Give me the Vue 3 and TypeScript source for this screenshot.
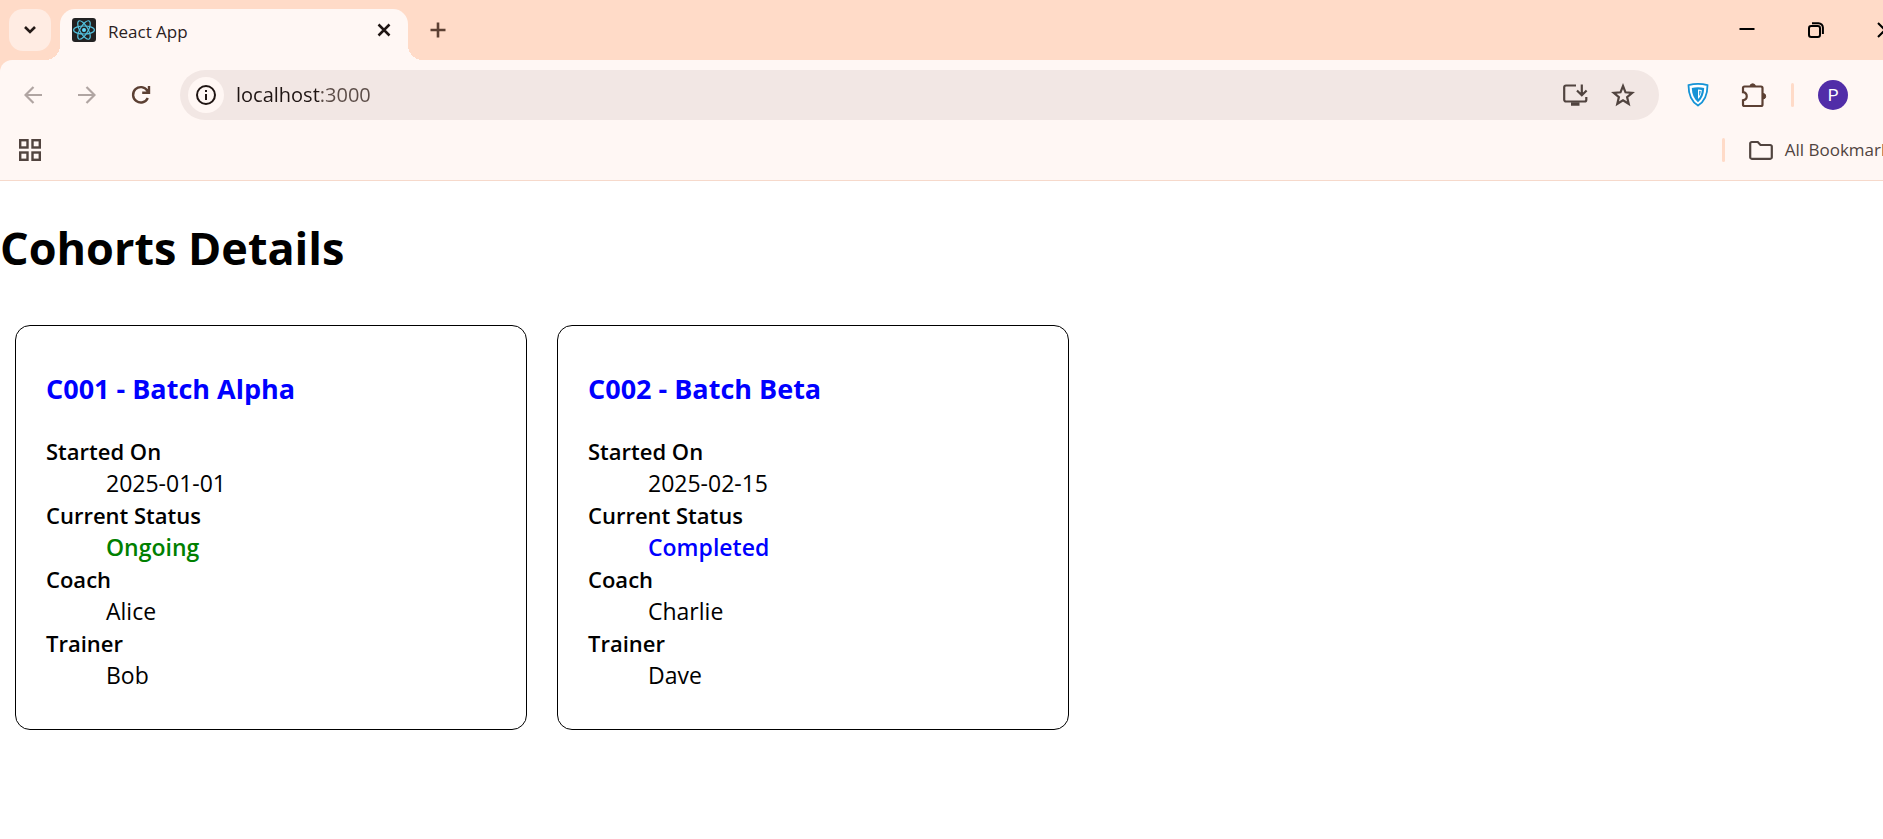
<script setup lang="ts">
import { ref } from 'vue'

interface Cohort {
  code: string
  name: string
  startedOn: string
  status: 'Ongoing' | 'Completed'
  coach: string
  trainer: string
}

const address = ref('localhost:3000')

const cohorts: Cohort[] = [
  { code: 'C001', name: 'Batch Alpha', startedOn: '2025-01-01', status: 'Ongoing', coach: 'Alice', trainer: 'Bob' },
  { code: 'C002', name: 'Batch Beta', startedOn: '2025-02-15', status: 'Completed', coach: 'Charlie', trainer: 'Dave' },
]
</script>

<template>
  <div class="screen">
    <header class="browser">
      <div class="strip">
        <button class="tab-search" type="button" aria-label="Search tabs">
          <svg width="14" height="10" viewBox="0 0 14 10"><path d="M2 2l5 5 5-5" fill="none" stroke="#241a17" stroke-width="2.6" /></svg>
        </button>
        <div class="tab">
          <svg class="favicon" width="24" height="24" viewBox="0 0 24 24">
            <rect width="24" height="24" rx="3" fill="#222" />
            <circle cx="12" cy="12" r="2" fill="#61dafb" />
            <g fill="none" stroke="#53c1de" stroke-width="1.2">
              <ellipse cx="12" cy="12" rx="10.4" ry="4" />
              <ellipse cx="12" cy="12" rx="10.4" ry="4" transform="rotate(60 12 12)" />
              <ellipse cx="12" cy="12" rx="10.4" ry="4" transform="rotate(120 12 12)" />
            </g>
          </svg>
          <span class="tab-title">React App</span>
          <button class="tab-close" type="button" aria-label="Close tab">
            <svg width="14" height="14" viewBox="0 0 14 14"><path d="M1.500 1.500l11 11M12.500 1.500l-11 11" stroke="#1f1513" stroke-width="2.5" /></svg>
          </button>
        </div>
        <button class="new-tab" type="button" aria-label="New tab">
          <svg width="16" height="16" viewBox="0 0 16 16"><path d="M8 0.500v15M0.500 8h15" stroke="#5c4033" stroke-width="2.600" /></svg>
        </button>
        <div class="window-buttons">
          <button type="button" aria-label="Minimize">
            <svg width="16" height="16" viewBox="0 0 16 16"><path d="M0.500 7h15" stroke="#000" stroke-width="2" /></svg>
          </button>
          <button type="button" aria-label="Restore">
            <svg width="16" height="16" viewBox="0 0 16 16" fill="none" stroke="#000" stroke-width="2">
              <rect x="1" y="4" width="11" height="11" rx="2.200" />
              <path d="M4 1.200h6.500a4.400 4.400 0 0 1 4.400 4.400V12" />
            </svg>
          </button>
          <button type="button" aria-label="Close">
            <svg width="16" height="16" viewBox="0 0 16 16"><path d="M1 1l14 14M15 1L1 15" stroke="#000" stroke-width="2" /></svg>
          </button>
        </div>
      </div>

      <div class="toolbar">
        <nav class="nav" aria-label="History">
          <button type="button" aria-label="Back">
            <svg width="18" height="18" viewBox="0 0 18 18"><path d="M18 9H2M9.500 1L1.500 9l8 8" fill="none" stroke="#b0a5a2" stroke-width="2.200" /></svg>
          </button>
          <button type="button" aria-label="Forward">
            <svg width="18" height="18" viewBox="0 0 18 18"><path d="M0 9h16M8.500 1l8 8-8 8" fill="none" stroke="#b0a5a2" stroke-width="2.200" /></svg>
          </button>
          <button type="button" aria-label="Reload">
            <svg width="20" height="20" viewBox="0 0 20 20" fill="none" stroke="#5c4033" stroke-width="2.400"><path d="M16.800 13A7.700 7.700 0 1 1 16.300 5.700L17.500 7.300M18 1v6.800h-6.800" /></svg>
          </button>
        </nav>
        <div class="omnibox">
          <button class="site-info" type="button" aria-label="View site information">
            <svg width="22" height="22" viewBox="0 0 22 22"><circle cx="11" cy="11" r="9" fill="none" stroke="#1f1513" stroke-width="2" /><path d="M11 10v6M11 6v2" stroke="#1f1513" stroke-width="2" /></svg>
          </button>
          <input v-model="address" class="address" type="text" aria-label="Address" spellcheck="false" />
          <button class="omni-action" type="button" aria-label="Install app">
            <svg width="26" height="24" viewBox="0 0 26 24" fill="none" stroke="#51443f" stroke-width="2.200">
              <path d="M14 2.500H4A1.800 1.800 0 0 0 2.200 4.300v12.400a1.800 1.800 0 0 0 1.800 1.800h18.500a1.800 1.800 0 0 0 1.800-1.800V14M19.800 1.500v10M15 7.500l4.800 4.800 4.800-4.800" />
              <path d="M9 21h8.500" stroke-width="3.500" />
            </svg>
          </button>
          <button class="omni-action" type="button" aria-label="Bookmark this page">
            <svg width="24" height="24" viewBox="0 0 24 24"><path d="M12 3l2.500 6.300 6.700.5-5.100 4.300 1.600 6.700L12 17.200l-5.700 3.600 1.600-6.700-5.100-4.300 6.700-.5z" fill="none" stroke="#51443f" stroke-width="2.200" /></svg>
          </button>
        </div>
        <button class="extension" type="button" aria-label="VPN extension">
          <svg width="22" height="24" viewBox="0 0 22 24">
            <path d="M1.500 2.200Q11-.4 20.500 2.200C20.500 11.500 17.500 18.500 11 22.600 4.500 18.500 1.500 11.500 1.500 2.200z" fill="#fff" stroke="#1593d6" stroke-width="1.800" />
            <path d="M4.800 5Q11 3.300 17.200 5C17 11.300 15 16 11 19.200 7 16 5 11.300 4.800 5z" fill="#1593d6" />
            <path d="M11 6.600q2 0 3.800.5c-.2 3.600-1.300 6.700-3.800 9z" fill="#fff" />
            <path d="M12.200 7.800q.8 0 1.500.2c-.1 2.100-.6 3.700-1.500 5z" fill="#1593d6" />
          </svg>
        </button>
        <button class="extension puzzle" type="button" aria-label="Extensions">
          <svg width="26" height="26" viewBox="0 0 26 26">
            <path d="M3.500 4.500h16.500a1.500 1.500 0 0 1 1.500 1.500v16.500a1.500 1.500 0 0 1-1.500 1.500H3.500A1.500 1.500 0 0 1 2 22.500V18.300c5-.8 5-7.300 0-8.100V6a1.500 1.500 0 0 1 1.500-1.500z" fill="none" stroke="#5c4033" stroke-width="2.200" />
            <path d="M9 4.500a2.700 2.700 0 0 1 5.400 0zM22 11.500a2.700 2.700 0 0 1 0 5.400z" fill="#5c4033" stroke="#5c4033" />
          </svg>
        </button>
        <span class="divider"></span>
        <button class="avatar" type="button" aria-label="Profile">P</button>
      </div>

      <div class="bookmarks">
        <button class="apps" type="button" aria-label="Apps">
          <svg width="22" height="22" viewBox="0 0 22 22" fill="none" stroke="#51443f" stroke-width="2.400">
            <rect x="1.200" y="1.200" width="7.300" height="7.300" /><rect x="13.500" y="1.200" width="7.300" height="7.300" />
            <rect x="1.200" y="13.500" width="7.300" height="7.300" /><rect x="13.500" y="13.500" width="7.300" height="7.300" />
          </svg>
        </button>
        <span class="divider"></span>
        <button class="all-bookmarks" type="button">
          <svg width="24" height="20" viewBox="0 0 24 20"><path d="M2.800 2h6l2.700 3h9.700A1.600 1.600 0 0 1 22.800 6.600v10.600A1.600 1.600 0 0 1 21.200 18.800H2.800A1.600 1.600 0 0 1 1.200 17.200V3.600A1.600 1.600 0 0 1 2.800 2z" fill="none" stroke="#51443f" stroke-width="2.200" /></svg>
          <span>All Bookmarks</span>
        </button>
      </div>
    </header>

    <main class="page">
      <h1>Cohorts Details</h1>
      <div class="cohorts">
        <article v-for="cohort in cohorts" :key="cohort.code" class="card">
          <h3>{{ cohort.code }} - {{ cohort.name }}</h3>
          <dl>
            <dt>Started On</dt>
            <dd>{{ cohort.startedOn }}</dd>
            <dt>Current Status</dt>
            <dd :class="['status', cohort.status.toLowerCase()]">{{ cohort.status }}</dd>
            <dt>Coach</dt>
            <dd>{{ cohort.coach }}</dd>
            <dt>Trainer</dt>
            <dd>{{ cohort.trainer }}</dd>
          </dl>
        </article>
      </div>
    </main>
  </div>
</template>

<style>
body {
  margin: 0;
  background: #fff;
}
</style>

<style scoped>
.screen {
  overflow: hidden;
  font-family: 'Open Sans', 'Noto Sans', sans-serif;
  color: #000;
}

button {
  display: flex;
  align-items: center;
  justify-content: center;
  flex: none;
  margin: 0;
  padding: 0;
  border: 0;
  background: none;
  font: inherit;
  color: inherit;
}

svg {
  display: block;
  flex: none;
}

/* The browser frame runs past the right edge of the viewport. */
.browser {
  width: calc(100% + 36px);
  background: #ffdbc8;
  border-bottom: 1px solid #f6d9cb;
}

.strip {
  display: flex;
  align-items: center;
  height: 60px;
}

.tab-search {
  width: 42px;
  height: 42px;
  margin-left: 9px;
  border-radius: 14px;
  background: #ffece3;
}

.tab {
  position: relative;
  display: flex;
  align-items: center;
  align-self: flex-end;
  box-sizing: border-box;
  width: 348px;
  height: 51px;
  margin-left: 9px;
  padding: 0 12px 9px;
  border-radius: 15px 15px 0 0;
  background: #fff7f4;
}

.tab::before,
.tab::after {
  content: '';
  position: absolute;
  bottom: 0;
  width: 15px;
  height: 15px;
}

.tab::before {
  right: 100%;
  background: radial-gradient(circle at 0 0, transparent 15px, #fff7f4 15px);
}

.tab::after {
  left: 100%;
  background: radial-gradient(circle at 100% 0, transparent 15px, #fff7f4 15px);
}

.tab-title {
  flex: 1;
  margin-left: 12px;
  padding-top: 3px;
  font-size: 17px;
  line-height: 24px;
  color: #2b211e;
}

.tab-close {
  width: 24px;
  height: 24px;
}

.new-tab {
  width: 42px;
  height: 42px;
  margin-left: 9px;
}

.window-buttons {
  display: flex;
  margin-left: auto;
}

.window-buttons button {
  width: 69px;
  height: 60px;
}

.toolbar {
  display: flex;
  align-items: center;
  height: 70px;
  padding-left: 12px;
  border-radius: 12px 0 0 0;
  background: #fff7f4;
}

.nav {
  display: flex;
  gap: 12px;
  margin-right: 18px;
}

.nav button {
  width: 42px;
  height: 42px;
}

.omnibox {
  display: flex;
  align-items: center;
  flex: 1;
  box-sizing: border-box;
  height: 50px;
  padding: 0 12px 0 8px;
  border-radius: 25px;
  background: #f2e7e4;
}

.site-info {
  width: 36px;
  height: 36px;
  border-radius: 50%;
  background: #fff7f4;
}

.address {
  flex: 1;
  min-width: 0;
  height: 32px;
  margin: 0 0 0 12px;
  padding: 0;
  border: 0;
  outline: 0;
  font: 20px/32px 'Open Sans', 'Noto Sans', sans-serif;
  color: transparent;
  background: linear-gradient(to right, #1f1513 85px, #5b4c47 85px);
  background-clip: text;
}

.omni-action {
  width: 48px;
  height: 48px;
}

.extension {
  width: 42px;
  height: 42px;
  margin-left: 18px;
}

.puzzle {
  margin-left: 14px;
}

.divider {
  flex: none;
  width: 3px;
  height: 24px;
  border-radius: 2px;
  background: #ffdbc8;
}

.toolbar .divider {
  margin-left: 16px;
}

.avatar {
  width: 30px;
  height: 30px;
  margin: 0 71px 0 24px;
  border-radius: 50%;
  background: #512da8;
  color: #fff;
  font-family: Roboto, sans-serif;
  font-size: 17px;
}

.bookmarks {
  display: flex;
  align-items: center;
  height: 50px;
  padding: 0 21px 0 9px;
  background: #fff7f4;
}

.bookmarks .apps {
  width: 42px;
  height: 40px;
  margin-right: auto;
}

.bookmarks > * {
  margin-bottom: 10px;
}

.all-bookmarks {
  gap: 12px;
  margin-left: 24px;
  font-size: 17px;
  line-height: 24px;
  color: #51443f;
}

h1 {
  margin: 35px 0 30px;
  font-size: 45px;
  line-height: 64px;
  font-weight: 700;
}

.cohorts {
  display: flex;
  flex-wrap: wrap;
}

.card {
  width: 450px;
  margin: 15px;
  padding: 16px 30px 14px;
  border: 1px solid #000;
  border-radius: 15px;
}

h3 {
  margin: 28px 0;
  font-size: 27px;
  line-height: 37px;
  font-weight: 700;
  color: #00f;
}

dl {
  margin: 24px 0;
  font-size: 23px;
  line-height: 32px;
}

dt {
  font-size: 22px;
  font-weight: 600;
}

dd {
  margin: 0 0 0 60px;
}

.status {
  font-weight: 600;
}

.ongoing {
  color: #008000;
}

.completed {
  color: #00f;
}
</style>
